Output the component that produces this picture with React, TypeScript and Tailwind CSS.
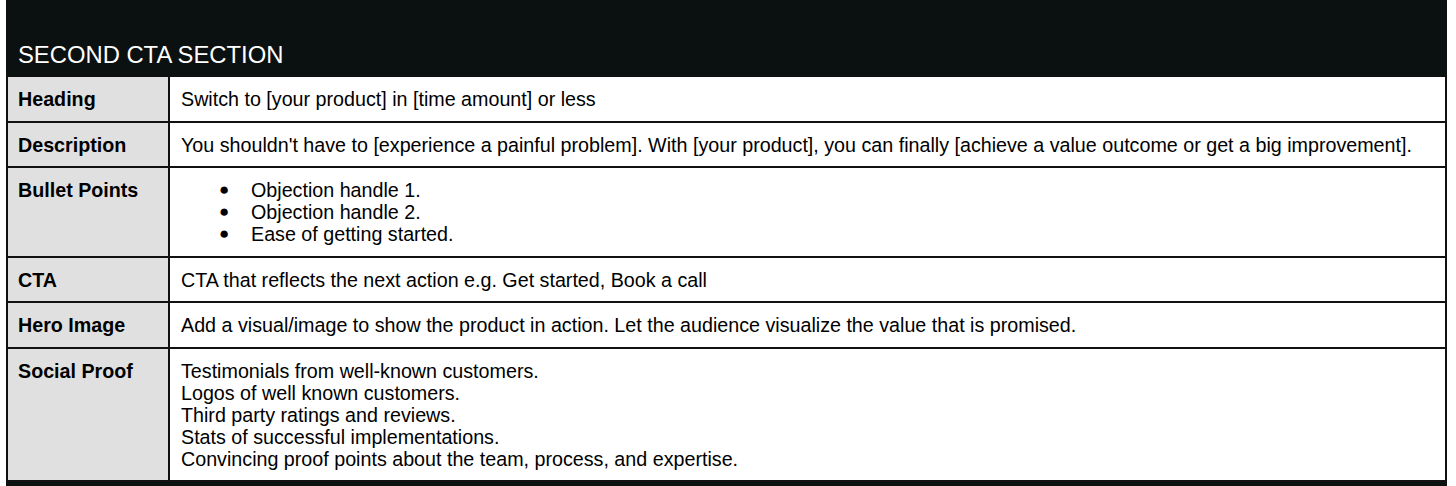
import React from "react";

const rows: { label: string; content: React.ReactNode }[] = [
  { label: "Heading", content: "Switch to [your product] in [time amount] or less" },
  {
    label: "Description",
    content:
      "You shouldn't have to [experience a painful problem]. With [your product], you can finally [achieve a value outcome or get a big improvement].",
  },
  {
    label: "Bullet Points",
    content: (
      <ul className="pl-[38px]">
        {["Objection handle 1.", "Objection handle 2.", "Ease of getting started."].map((b) => (
          <li key={b} className="flex">
            <span className="w-[32px] text-[17px]">●</span>
            <span>{b}</span>
          </li>
        ))}
      </ul>
    ),
  },
  { label: "CTA", content: "CTA that reflects the next action e.g. Get started, Book a call" },
  {
    label: "Hero Image",
    content:
      "Add a visual/image to show the product in action. Let the audience visualize the value that is promised.",
  },
  {
    label: "Social Proof",
    content: (
      <div>
        <div>Testimonials from well-known customers.</div>
        <div>Logos of well known customers.</div>
        <div>Third party ratings and reviews.</div>
        <div>Stats of successful implementations.</div>
        <div>Convincing proof points about the team, process, and expertise.</div>
      </div>
    ),
  },
];

export default function App() {
  return (
    <div className="w-[1456px] h-[486px] overflow-hidden bg-white font-['Liberation_Sans',Arial,sans-serif] text-black">
      <div className="ml-[6px] w-[1441px]">
        {/* Section header */}
        <div className="h-[77px] bg-[#0a1110] flex items-end px-3 pb-[8px]">
          <h2 className="text-white text-[23.8px] leading-[28px]">SECOND CTA SECTION</h2>
        </div>

        {rows.map((r) => (
          <div
            key={r.label}
            className="grid grid-cols-[162px_1fr] border-x-2 border-b-2 border-[#111]"
          >
            <div className="bg-[#e0e0e0] border-r-2 border-[#111] px-[10px] pt-[11px] pb-[10.5px] text-[19.7px] leading-[22px] font-bold">
              {r.label}
            </div>
            <div className="px-[11px] pt-[11px] pb-[10.5px] text-[19.7px] leading-[22px]">{r.content}</div>
          </div>
        ))}

        <div className="h-[10px] bg-[#0a1110]" />
      </div>
    </div>
  );
}
